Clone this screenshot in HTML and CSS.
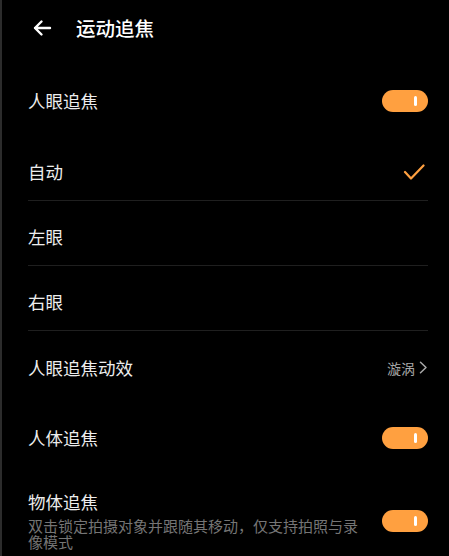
FILE: index.html
```html
<!DOCTYPE html>
<html lang="zh-CN">
<head>
<meta charset="utf-8">
<link rel="stylesheet" href="styles.css">
</head>
<body>
<div class="page">
  <header class="header">
    <svg class="back" width="20" height="18" viewBox="0 0 20 18"><path d="M18 9H3M9.5 2.5L3 9l6.5 6.5" fill="none" stroke="#fff" stroke-width="2.4" stroke-linecap="round" stroke-linejoin="round"/></svg>
    <span class="title">运动追焦</span>
  </header>
  <div class="list">
    <div class="row row-first"><span class="label">人眼追焦</span><span class="toggle"><span class="knob"></span></span></div>
    <div class="row row-opt line"><span class="label">自动</span>
      <svg class="check" width="22" height="16" viewBox="0 0 22 16"><path d="M2 8l6 6.5L20.5 1.5" fill="none" stroke="#ffa040" stroke-width="2.2" stroke-linecap="round" stroke-linejoin="round"/></svg>
    </div>
    <div class="row row-opt line"><span class="label">左眼</span></div>
    <div class="row row-opt line"><span class="label">右眼</span></div>
    <div class="row row-opt"><span class="label">人眼追焦动效</span>
      <span class="value">漩涡<svg class="chev" width="9" height="13" viewBox="0 0 9 13"><path d="M1.5 1.2L7 6.5 1.5 11.8" fill="none" stroke="#a8a8a8" stroke-width="1.5" stroke-linecap="round" stroke-linejoin="round"/></svg></span>
    </div>
    <div class="row row-body"><span class="label">人体追焦</span><span class="toggle"><span class="knob"></span></span></div>
    <div class="row row-obj">
      <div class="texts">
        <span class="label">物体追焦</span>
        <span class="sub">双击锁定拍摄对象并跟随其移动，仅支持拍照与录像模式</span>
      </div>
      <span class="toggle"><span class="knob"></span></span>
    </div>
  </div>
</div>
</body>
</html>
```

FILE: styles.css
```css
html, body {
  margin: 0;
  padding: 0;
  background: #000;
}
body {
  width: 449px;
  height: 556px;
  overflow: hidden;
  font-family: "Noto Sans CJK SC", "Noto Sans", sans-serif;
  color: #e8e8e8;
}
.page {
  height: 556px;
  border-left: 2px solid #2c2c2c;
  box-sizing: border-box;
}
.header {
  height: 56px;
  display: flex;
  align-items: center;
  padding-left: 30px;
}
.back {
  display: block;
}
.title {
  margin-left: 24px;
  font-size: 19.5px;
  font-weight: 500;
  color: #fff;
  line-height: 24px;
}
.list {
  padding: 0 21px 0 26px;
}
.row {
  display: flex;
  align-items: center;
  justify-content: space-between;
  box-sizing: border-box;
}
.line {
  border-bottom: 1px solid #1f1f1f;
}
.label {
  font-size: 17.5px;
  line-height: 22px;
  color: #ededed;
}
.row-first {
  height: 80px;
  padding-top: 10px;
}
.row-opt {
  height: 65px;
  padding-top: 8px;
}
.row-body {
  height: 75px;
  padding-top: 9px;
}
.row-obj {
  padding-top: 20px;
}
.texts {
  display: flex;
  flex-direction: column;
}
.sub {
  margin-top: 5px;
  width: 340px;
  font-size: 15px;
  line-height: 16px;
  color: #757575;
}
.toggle {
  width: 46px;
  height: 22px;
  border-radius: 11px;
  background: #ffa040;
  display: flex;
  align-items: center;
  justify-content: flex-end;
  padding-right: 11px;
  box-sizing: border-box;
  flex-shrink: 0;
}
.knob {
  width: 3px;
  height: 10px;
  border-radius: 2px;
  background: #fff;
}
.check {
  display: block;
  margin-right: 3px;
}
.value {
  display: flex;
  align-items: center;
  font-size: 14px;
  color: #a8a8a8;
  line-height: 18px;
}
.chev {
  display: block;
  margin-left: 4px;
}
```
